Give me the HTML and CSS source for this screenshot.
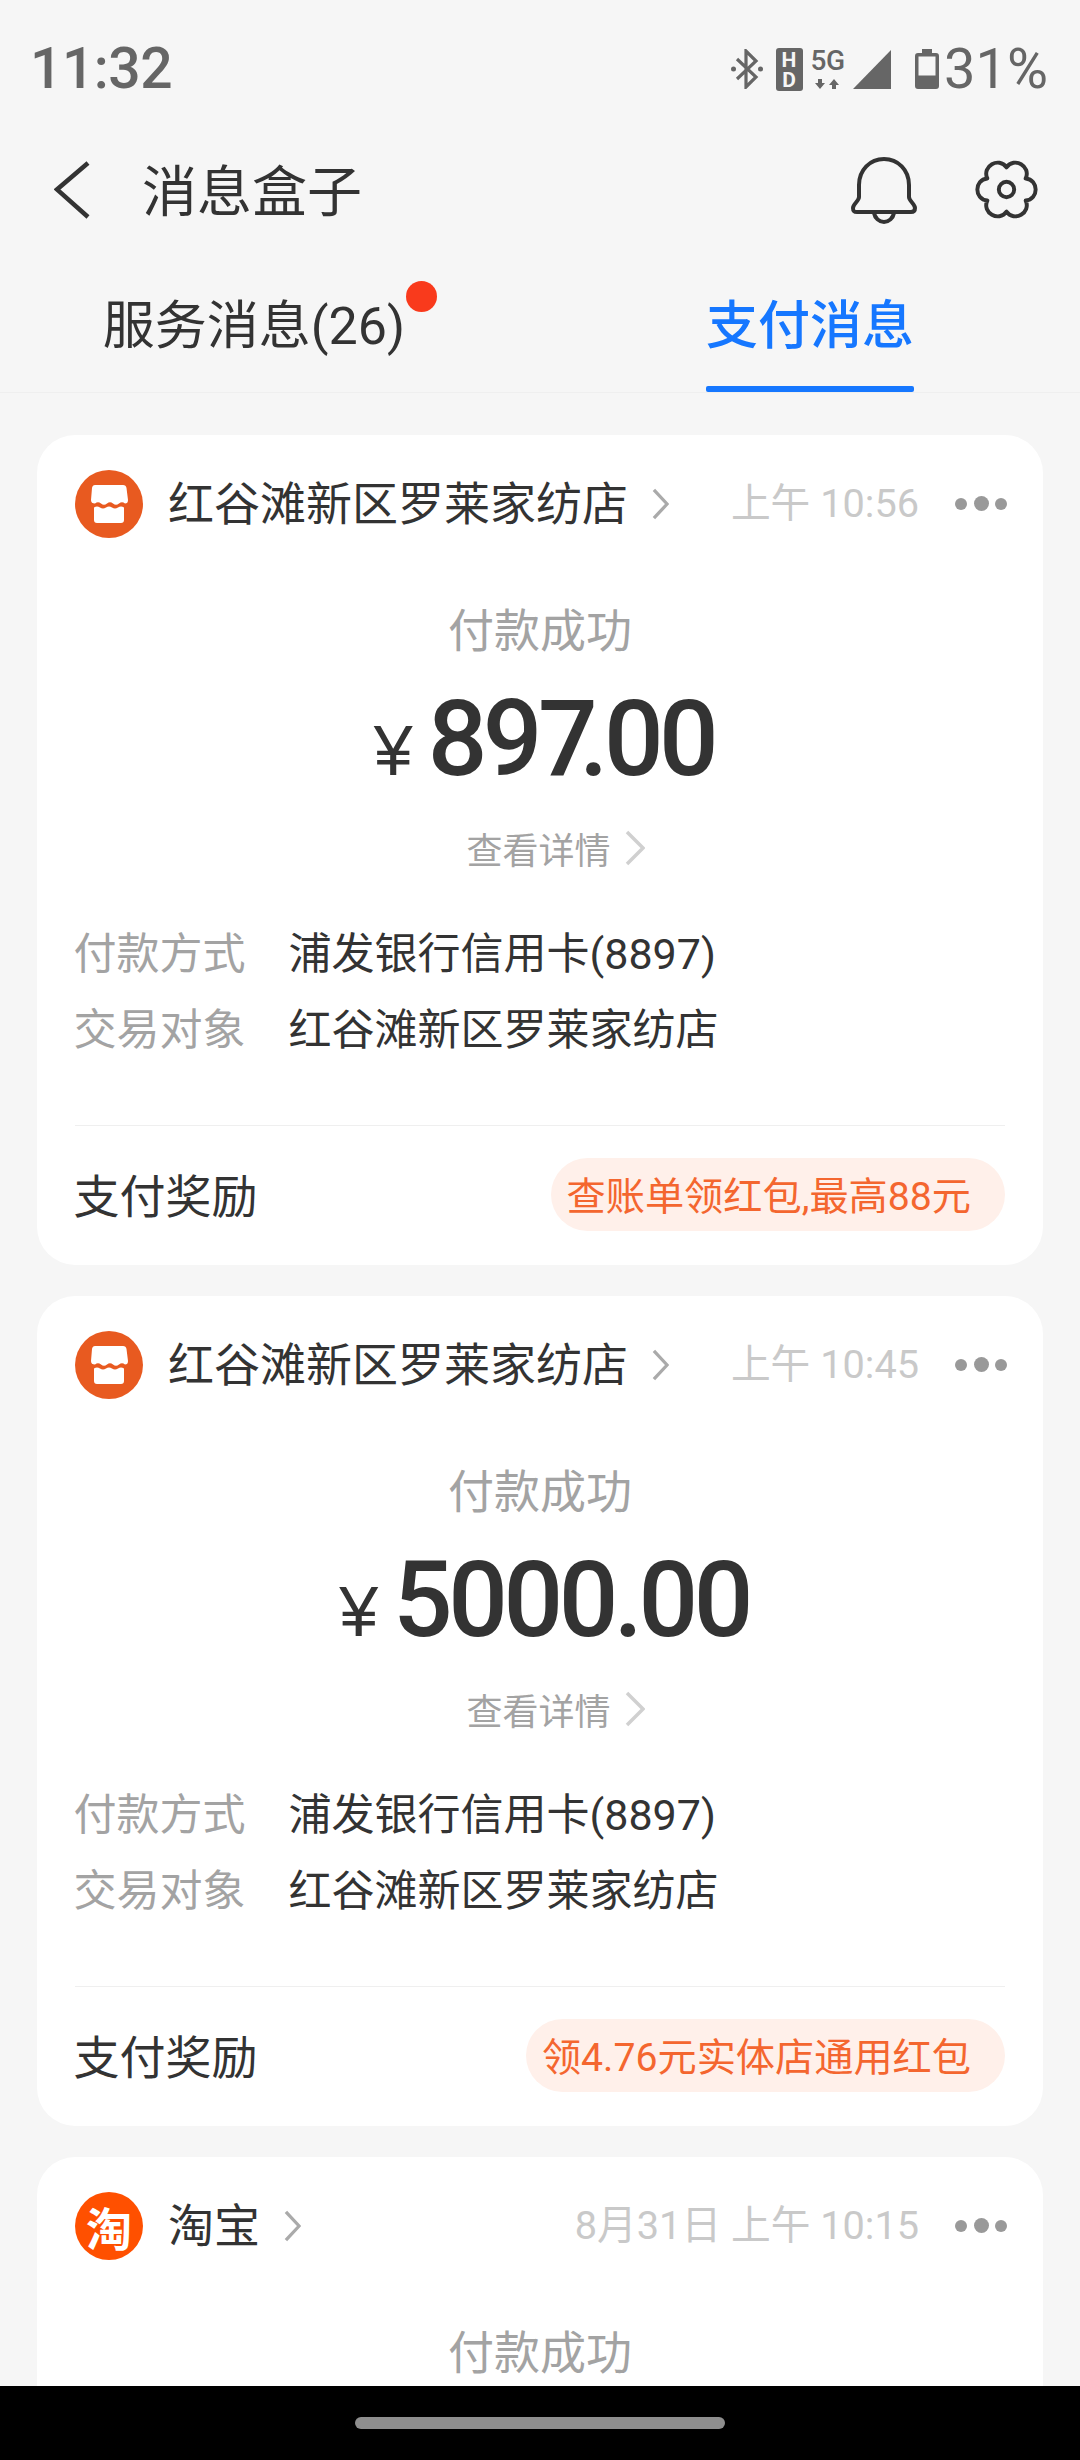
FILE: index.html
```html
<!DOCTYPE html>
<html lang="zh-CN">
<head>
<meta charset="utf-8">
<title>消息盒子</title>
<link rel="stylesheet" href="styles.css">
</head>
<body>
<div class="screen">
  <div class="status">
    <span class="clock">11:32</span>
    <div class="sys">
      <svg class="i-bt" viewBox="0 0 32 40"><circle cx="2.5" cy="20" r="2.5" class="f"/><circle cx="29.5" cy="20" r="2.5" class="f"/><path d="M6 10 25 28 15 38V2L25 12 6 30" class="s"/></svg>
      <div class="hd"><span>H</span><span>D</span></div>
      <div class="net"><span class="fiveg">5G</span><svg class="arrows" viewBox="0 0 26 10"><path d="M3 0h4v4h3L5 10 0 4h3zM19 0l5 6h-3v4h-4V6h-3z" class="f"/></svg></div>
      <svg class="i-sig" viewBox="0 0 38 39"><path d="M0 39 38 0V39Z" class="f"/></svg>
      <svg class="i-bat" viewBox="0 0 24 40"><path d="M7 0h10v4h4a3 3 0 0 1 3 3v30a3 3 0 0 1-3 3H3a3 3 0 0 1-3-3V7a3 3 0 0 1 3-3h4z" class="f"/><rect x="3.5" y="7.500" width="17" height="19" fill="#f6f6f6"/></svg>
      <span class="pct">31%</span>
    </div>
  </div>

  <header class="bar">
    <svg class="i-back" viewBox="0 0 36 58"><path d="M34 2 3 28.500 34 56" fill="none" stroke="#333" stroke-width="4.500"/></svg>
    <h1 class="title">消息盒子</h1>
    <svg class="i-bell" viewBox="0 0 66 67"><path d="M8 28C8 13 19 2 33 2s25 11 25 26v12c0 4 6 7 6 11 0 3-2 4-4 4H6c-3 0-4-1-4-4 0-4 6-7 6-11ZM23 56c1 5 5 9 10 9s9-4 10-9" fill="none" stroke="#333" stroke-width="4" stroke-linejoin="round"/></svg>
    <svg class="i-gear" viewBox="-32 -32 64 64"><path d="M19.490 -11.250C32.990 -10.090 32.990 10.090 19.490 11.250C25.230 23.530 7.760 33.620 0 22.500C-7.760 33.620 -25.230 23.530 -19.490 11.250C-32.990 10.090 -32.990 -10.090 -19.490 -11.250C-25.230 -23.530 -7.760 -33.620 0 -22.500C7.760 -33.620 25.230 -23.530 19.490 -11.250Z" fill="none" stroke="#333" stroke-width="4" stroke-linejoin="round"/><circle r="7.800" fill="none" stroke="#333" stroke-width="4"/></svg>
  </header>

  <nav class="tabs">
    <div class="tab"><span class="tab-label has-badge">服务消息(26)<i class="badge"></i></span></div>
    <div class="tab active"><span class="tab-label">支付消息</span><i class="ink"></i></div>
  </nav>

  <main class="list">
    <article class="card">
      <div class="head">
        <svg class="logo" viewBox="0 0 68 68"><circle cx="34" cy="34" r="34" fill="#e85a20"/><path d="M20 15H48Q51 15 51.500 18L53 30Q53 33.500 50 33.500 47 31 44 33.500 41 36 38 33.500 35 31 32 33.500 29 36 26 33.500 23 31 20 33.500 16 33.500 16 30L17 18Q17.500 15 20 15Z" fill="#fff"/><path d="M19 37.500Q22 35.500 25 37.500 28 39.500 31 37.500 34 35.500 37 37.500 40 39.500 43 37.500 46 35.500 49 37.500V50Q49 53 46 53H22Q19 53 19 50Z" fill="#fff"/></svg>
        <span class="name">红谷滩新区罗莱家纺店</span>
        <svg class="chev" viewBox="0 0 18 34"><path d="M2 2 16 17 2 32" class="c"/></svg>
        <span class="time">上午 10:56</span>
        <span class="more"><i></i><i class="mid"></i><i></i></span>
      </div>
      <p class="state">付款成功</p>
      <div class="amount"><span class="yen">¥</span><span class="num">89<span class="kern">7</span>.00</span></div>
      <div class="link">查看详情<svg class="chev-l" viewBox="0 0 20 36"><path d="M2 2 18 18 2 34" class="c"/></svg></div>
      <div class="row"><span class="k">付款方式</span><span class="v">浦发银行信用卡(8897)</span></div>
      <div class="row"><span class="k">交易对象</span><span class="v">红谷滩新区罗莱家纺店</span></div>
      <div class="foot"><span class="reward">支付奖励</span><span class="pill">查账单领红包,最高88元</span></div>
    </article>

    <article class="card">
      <div class="head">
        <svg class="logo" viewBox="0 0 68 68"><circle cx="34" cy="34" r="34" fill="#e85a20"/><path d="M20 15H48Q51 15 51.500 18L53 30Q53 33.500 50 33.500 47 31 44 33.500 41 36 38 33.500 35 31 32 33.500 29 36 26 33.500 23 31 20 33.500 16 33.500 16 30L17 18Q17.500 15 20 15Z" fill="#fff"/><path d="M19 37.500Q22 35.500 25 37.500 28 39.500 31 37.500 34 35.500 37 37.500 40 39.500 43 37.500 46 35.500 49 37.500V50Q49 53 46 53H22Q19 53 19 50Z" fill="#fff"/></svg>
        <span class="name">红谷滩新区罗莱家纺店</span>
        <svg class="chev" viewBox="0 0 18 34"><path d="M2 2 16 17 2 32" class="c"/></svg>
        <span class="time">上午 10:45</span>
        <span class="more"><i></i><i class="mid"></i><i></i></span>
      </div>
      <p class="state">付款成功</p>
      <div class="amount"><span class="yen">¥</span><span class="num">5000.00</span></div>
      <div class="link">查看详情<svg class="chev-l" viewBox="0 0 20 36"><path d="M2 2 18 18 2 34" class="c"/></svg></div>
      <div class="row"><span class="k">付款方式</span><span class="v">浦发银行信用卡(8897)</span></div>
      <div class="row"><span class="k">交易对象</span><span class="v">红谷滩新区罗莱家纺店</span></div>
      <div class="foot"><span class="reward">支付奖励</span><span class="pill">领4.76元实体店通用红包</span></div>
    </article>

    <article class="card">
      <div class="head">
        <span class="logo tb">淘</span>
        <span class="name">淘宝</span>
        <svg class="chev" viewBox="0 0 18 34"><path d="M2 2 16 17 2 32" class="c"/></svg>
        <span class="time">8月31日 上午 10:15</span>
        <span class="more"><i></i><i class="mid"></i><i></i></span>
      </div>
      <p class="state">付款成功</p>
    </article>
  </main>

  <div class="navbar"><i class="home"></i></div>
</div>
</body>
</html>
```

FILE: styles.css
```css
* { box-sizing: border-box; }
html, body { margin: 0; padding: 0; }
body { font-family: Roboto, "Noto Sans CJK SC", sans-serif; color: #333; background: #f6f6f6; }
.screen { width: 1080px; height: 2460px; display: flex; flex-direction: column; overflow: hidden; background: #f6f6f6; }

/* status bar */
.status { flex: none; height: 138px; display: flex; align-items: center; justify-content: space-between; padding: 0 32px 0 30px; color: #666; }
.clock { font-size: 57px; line-height: 64px; font-weight: 500; letter-spacing: -0.5px; }
.sys { display: flex; align-items: center; }
.f { fill: #666; }
.s { fill: none; stroke: #666; stroke-width: 3.200; }
.i-bt { width: 32px; height: 40px; }
.hd { width: 27px; height: 43px; margin-left: 13px; background: #666; border-radius: 3px; color: #f6f6f6; display: flex; flex-direction: column; align-items: center; font-size: 21px; font-weight: 700; line-height: 20px; padding-top: 2px; }
.net { width: 36px; margin-left: 7px; display: flex; flex-direction: column; align-items: center; }
.fiveg { font-size: 28px; line-height: 24px; font-weight: 500; letter-spacing: -0.5px; }
.arrows { width: 26px; height: 10px; margin-top: 6px; }
.i-sig { width: 38px; height: 39px; margin-left: 7px; }
.i-bat { width: 24px; height: 40px; margin-left: 24.500px; }
.pct { font-size: 56px; line-height: 64px; margin-left: 5px; }

/* title bar */
.bar { flex: none; height: 102px; display: flex; align-items: center; padding-left: 54px; padding-right: 42px; }
.i-back { width: 36px; height: 58px; margin-top: 2px; }
.title { flex: 1; margin: 6px 0 0 52px; font-size: 55px; line-height: 70px; font-weight: 400; color: #333; }
.i-bell { width: 66px; height: 67px; margin-top: 2px; }
.i-gear { width: 63px; height: 63px; margin-left: 58px; }

/* tabs */
.tabs { flex: none; height: 153px; display: flex; padding-top: 57px; border-bottom: 1px solid #efefef; }
.tab { width: 540px; display: flex; flex-direction: column; align-items: center; }
.tab-label { position: relative; font-size: 52px; line-height: 60px; color: #333; }
.has-badge { padding-right: 32px; }
.badge { position: absolute; right: 0; top: -16px; width: 31px; height: 31px; border-radius: 50%; background: #f93a1c; }
.active .tab-label { color: #1677ff; font-weight: 500; }
.ink { display: block; width: 208px; height: 6px; margin-top: 29px; border-radius: 2px; background: #1677ff; }

/* card list */
.list { flex: 1; min-height: 0; overflow: hidden; display: flex; flex-direction: column; gap: 31px; padding: 42px 37px 0; }
.card { flex: none; height: 830px; background: #fff; border-radius: 38px; padding: 0 38px; }
.head { height: 137px; display: flex; align-items: center; }
.logo { flex: none; width: 68px; height: 68px; }
.tb { border-radius: 50%; background: #ff5000; color: #fff; font-family: "Noto Sans CJK SC", sans-serif; font-weight: 700; font-size: 46px; line-height: 68px; text-align: center; }
.name { margin-left: 25px; font-size: 46px; line-height: 60px; color: #333; }
.chev { flex: none; width: 17px; height: 32px; margin-left: 24px; }
.c { fill: none; stroke: #aaa; stroke-width: 3.500; }
.time { margin-left: auto; font-size: 39.700px; line-height: 50px; color: #c9c9c9; }
.more { flex: none; width: 52px; margin-left: 36px; margin-right: -2px; display: flex; align-items: center; justify-content: space-between; }
.more i { width: 12px; height: 12px; border-radius: 50%; background: #999; }
.more .mid { width: 15px; height: 15px; }

.state { margin: 0; height: 110px; display: flex; align-items: center; justify-content: center; font-size: 46px; color: #a3a3a3; }
.amount { margin-top: 10px; height: 92px; display: flex; justify-content: center; align-items: baseline; line-height: 96px; color: #333; padding-left: 8px; }
.yen { font-family: "Liberation Sans", sans-serif; font-size: 70px; margin-right: 15px; }
.num { font-size: 105px; font-weight: 500; letter-spacing: -4.500px; }
.kern { letter-spacing: -18.500px; }
.link { height: 128px; display: flex; align-items: center; justify-content: center; font-size: 36px; color: #a3a3a3; padding-left: 31px; }
.chev-l { width: 20px; height: 36px; margin-left: 14px; }
.chev-l .c { stroke: #d0d0d0; }

.row { height: 76px; display: flex; align-items: center; font-size: 43px; }
.k { width: 215px; margin-left: -1.500px; color: #a3a3a3; }
.v { color: #333; }

.foot { margin-top: 61px; height: 140px; padding-bottom: 2px; border-top: 1px solid #efefef; display: flex; align-items: center; justify-content: space-between; }
.reward { margin-left: -1.500px; margin-bottom: 4px; font-size: 46px; color: #333; }
.pill { height: 73px; display: flex; align-items: center; padding: 0 34px 4px 16px; border-radius: 37px; background: #fff0ea; color: #f4662f; font-size: 39.200px; }

/* bottom nav */
.navbar { flex: none; height: 74px; background: #000; position: relative; display: flex; justify-content: center; padding-top: 31px; }
.home { display: block; width: 370px; height: 12px; border-radius: 6px; background: #8e8e8e; }
```
